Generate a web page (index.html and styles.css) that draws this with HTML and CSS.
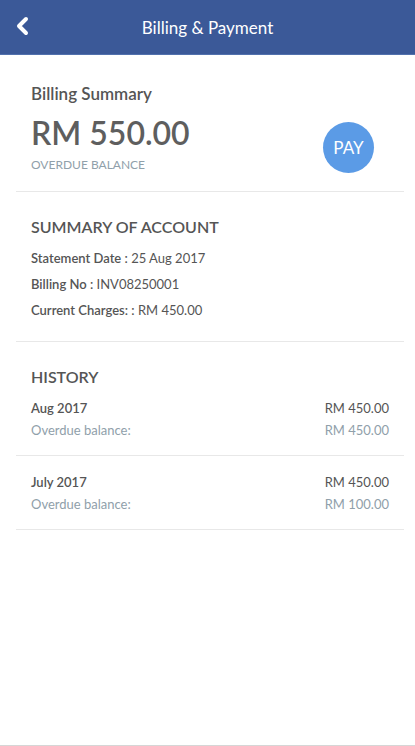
FILE: index.html
```html
<!DOCTYPE html>
<html lang="en">

<head>
    <meta charset="UTF-8">
    <meta name="viewport" content="width=device-width, initial-scale=1.0">
    <title>Billing &amp; Payment</title>
    <link rel="stylesheet" href="styles.css">
</head>

<body>

    <div class="app">
        <header class="topbar">
            <button class="back-btn" aria-label="Back">
                <svg width="16" height="20" viewBox="0 0 16 20">
                    <path d="M12 3 L5 10 L12 17" fill="none" stroke="#fff" stroke-width="4"
                        stroke-linecap="round" stroke-linejoin="round" />
                </svg>
            </button>
            <h1>Billing &amp; Payment</h1>
        </header>

        <section class="section summary">
            <div class="summary-info">
                <h2 class="summary-title">Billing Summary</h2>
                <div class="amount">RM 550.00</div>
                <div class="amount-label">OVERDUE BALANCE</div>
            </div>
            <button class="pay-btn">PAY</button>
        </section>

        <section class="section account">
            <h3>SUMMARY OF ACCOUNT</h3>
            <p><b>Statement Date :</b> 25 Aug 2017</p>
            <p><b>Billing No :</b> INV08250001</p>
            <p><b>Current Charges: :</b> RM 450.00</p>
        </section>

        <section class="history">
            <h3>HISTORY</h3>

            <div class="history-item">
                <div class="row">
                    <span class="month">Aug 2017</span>
                    <span>RM 450.00</span>
                </div>
                <div class="row muted">
                    <span>Overdue balance:</span>
                    <span>RM 450.00</span>
                </div>
            </div>

            <div class="history-item">
                <div class="row">
                    <span class="month">July 2017</span>
                    <span>RM 450.00</span>
                </div>
                <div class="row muted">
                    <span>Overdue balance:</span>
                    <span>RM 100.00</span>
                </div>
            </div>
        </section>
    </div>

</body>

</html>
```

FILE: styles.css
```css
* {
    margin: 0;
    padding: 0;
    box-sizing: border-box;
    font-family: 'Lato', 'Open Sans', sans-serif;
}

body {
    background-color: #fff;
    color: #555;
    height: 746px;
    overflow: hidden;
}

b {
    font-weight: 600;
}

.app {
    height: 746px;
    border-bottom: 1px solid #d6d6d6;
}

.topbar {
    height: 55px;
    background-color: #3b5998;
    border-bottom: 1px solid #5271ad;
    display: flex;
    align-items: center;
    justify-content: center;
    position: relative;
}

.topbar h1 {
    color: #fff;
    font-size: 17px;
    font-weight: normal;
}

.back-btn {
    position: absolute;
    left: 14px;
    top: 16px;
    background: none;
    border: none;
    display: flex;
}

.section {
    margin: 0 11px 0 16px;
    border-bottom: 1px solid #e8e8e8;
}

.summary {
    display: flex;
    align-items: flex-start;
    justify-content: space-between;
    padding: 28px 30px 18px 15px;
}

.summary-title {
    font-size: 17px;
    font-weight: 600;
    color: #555;
}

.amount {
    font-size: 32px;
    font-weight: 600;
    color: #5e5e5e;
    line-height: 44px;
    margin-top: 7px;
}

.amount-label {
    font-size: 12px;
    color: #90a0aa;
    margin-top: 2px;
}

.pay-btn {
    width: 51px;
    height: 51px;
    border-radius: 50%;
    border: none;
    background-color: #5b9be6;
    color: #fff;
    font-size: 17px;
    margin-top: 39px;
}

.account {
    padding: 25px 15px 18px;
}

h3 {
    font-size: 16px;
    line-height: 20px;
    font-weight: 600;
    color: #555;
    margin-bottom: 8px;
}

.account p {
    font-size: 13px;
    line-height: 26px;
    color: #555;
}

.history {
    padding-top: 25px;
}

.history h3 {
    margin: 0 0 4px 31px;
}

.history-item {
    margin: 0 11px 0 16px;
    padding: 6px 15px 14px;
    border-bottom: 1px solid #e8e8e8;
}

.history-item + .history-item {
    padding-top: 15px;
}

.row {
    display: flex;
    justify-content: space-between;
    font-size: 13px;
    line-height: 22px;
    color: #555;
}

.month {
    font-weight: 600;
}

.muted {
    color: #90a0aa;
}
```
